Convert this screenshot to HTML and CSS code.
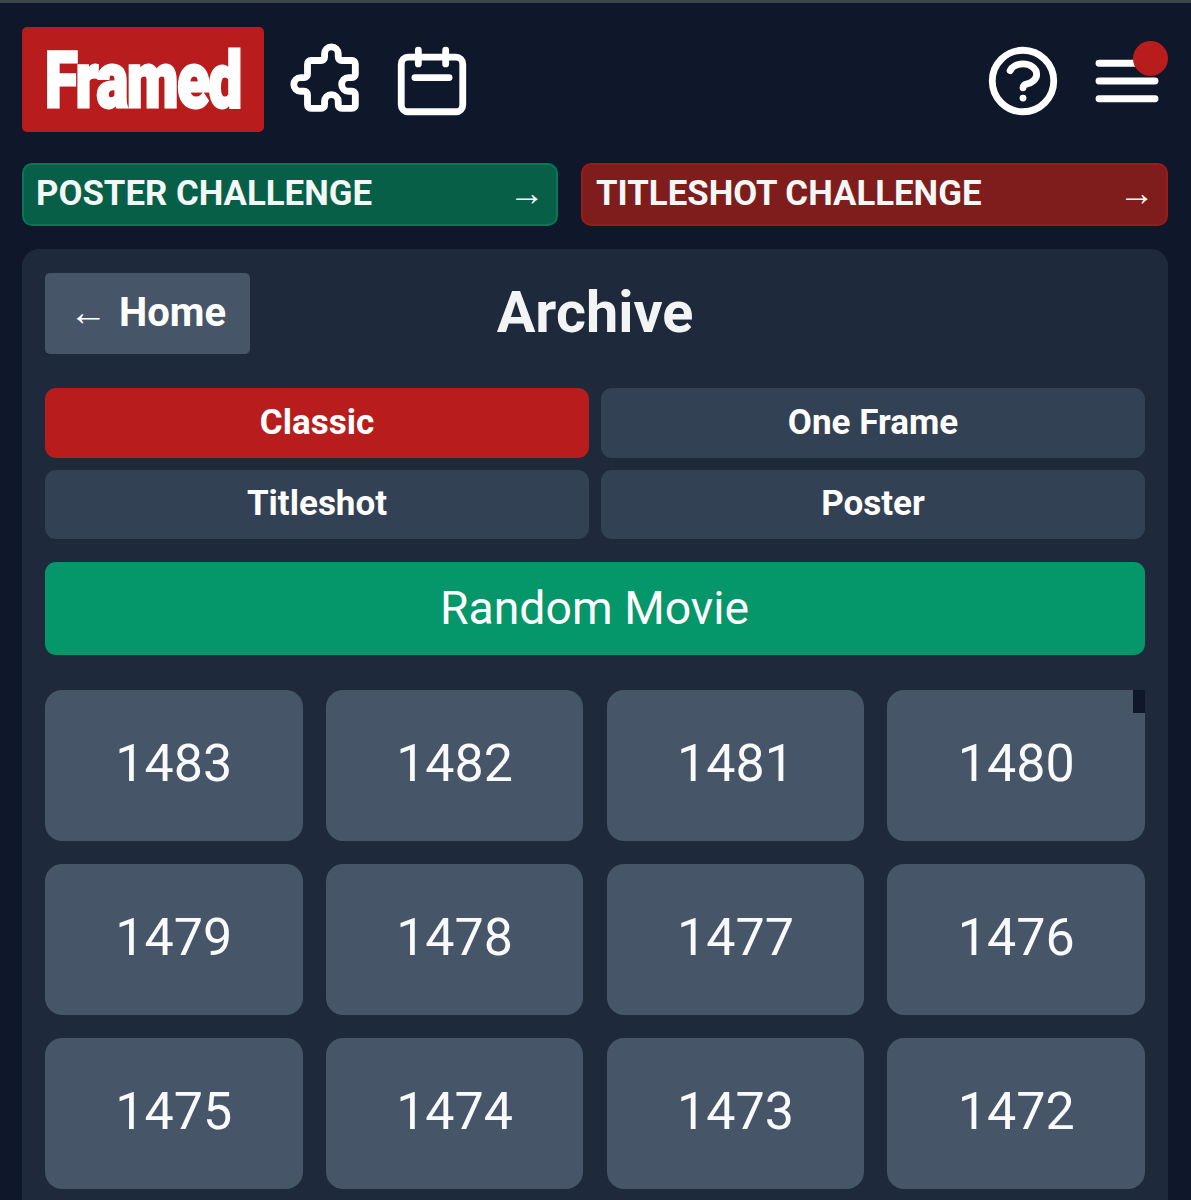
FILE: index.html
```html
<!DOCTYPE html>
<html lang="en">
<head>
<meta charset="utf-8">
<title>Framed Archive</title>
<link rel="stylesheet" href="styles.css">
</head>
<body>
<div class="page">
  <header class="header">
    <a class="logo"><span class="logo-text">Framed</span></a>
    <svg class="icon icon-puzzle" viewBox="0 0 24 24"><path d="M11 4a2 2 0 114 0v1a1 1 0 001 1h3a1 1 0 011 1v3a1 1 0 01-1 1h-1a2 2 0 100 4h1a1 1 0 011 1v3a1 1 0 01-1 1h-3a1 1 0 01-1-1v-1a2 2 0 10-4 0v1a1 1 0 01-1 1H7a1 1 0 01-1-1v-3a1 1 0 00-1-1H4a2 2 0 110-4h1a1 1 0 001-1V7a1 1 0 011-1h3a1 1 0 001-1V4z"/></svg>
    <svg class="icon" viewBox="0 0 24 24"><path d="M8 7V3m8 4V3m-9 8h10M5 21h14a2 2 0 002-2V7a2 2 0 00-2-2H5a2 2 0 00-2 2v12a2 2 0 002 2z"/></svg>
    <div class="spacer"></div>
    <svg class="icon" viewBox="0 0 24 24"><path d="M8.228 9c.549-1.165 2.03-2 3.772-2 2.21 0 4 1.343 4 3 0 1.4-1.278 2.575-3.006 2.907-.542.104-.994.54-.994 1.093m0 3h.01M21 12a9 9 0 11-18 0 9 9 0 0118 0z"/></svg>
    <div class="menu">
      <svg class="icon" viewBox="0 0 24 24"><path d="M3.8 6.8h16.4M3.8 12h16.4M3.8 17.2h16.4"/></svg>
      <span class="dot"></span>
    </div>
  </header>

  <nav class="challenges">
    <a class="challenge challenge-green"><span>POSTER CHALLENGE</span><span class="arrow">→</span></a>
    <a class="challenge challenge-red"><span>TITLESHOT CHALLENGE</span><span class="arrow">→</span></a>
  </nav>

  <main class="panel">
    <div class="title-row">
      <a class="home"><span class="home-arrow">←</span><span>Home</span></a>
      <h1 class="title">Archive</h1>
      <div></div>
    </div>

    <div class="tabs">
      <button class="tab tab-active">Classic</button>
      <button class="tab">One Frame</button>
      <button class="tab">Titleshot</button>
      <button class="tab">Poster</button>
    </div>

    <button class="random">Random Movie</button>

    <div class="grid">
      <a class="cell">1483</a>
      <a class="cell">1482</a>
      <a class="cell">1481</a>
      <a class="cell cell-marked">1480<span class="mark"></span></a>
      <a class="cell">1479</a>
      <a class="cell">1478</a>
      <a class="cell">1477</a>
      <a class="cell">1476</a>
      <a class="cell">1475</a>
      <a class="cell">1474</a>
      <a class="cell">1473</a>
      <a class="cell">1472</a>
    </div>
  </main>
</div>
</body>
</html>
```
FILE: styles.css
```css
* { box-sizing: border-box; }
html, body { margin: 0; height: 1200px; overflow: hidden; }
body {
  background: #0f172a;
  color: #fff;
  font-family: Roboto, "Liberation Sans", sans-serif;
  border-top: 3px solid #3f444c;
}
.page { padding: 24px 23px 0 22px; }

.header { display: flex; align-items: flex-start; gap: 22px; height: 105px; }
.logo {
  width: 242px; height: 105px;
  margin-right: 1px;
  background: #b91c1c;
  border-radius: 5px;
  display: flex; align-items: center; justify-content: center;
  overflow: hidden;
  padding-top: 3px;
}
.logo-text {
  font-family: Roboto, "Liberation Sans", sans-serif;
  font-weight: 900;
  font-size: 78px;
  line-height: 1;
  letter-spacing: -1.5px;
  -webkit-text-stroke: 3px #fff;
  display: inline-block;
  transform: scaleX(.765);
  flex: none;
}
.icon {
  width: 82px; height: 82px;
  margin-top: 13px;
  flex: none;
  fill: none;
  stroke: #fff;
  stroke-width: 2;
  stroke-linecap: round;
  stroke-linejoin: round;
}
.spacer { flex: 1; }
.menu { position: relative; width: 82px; height: 105px; flex: none; }
.dot {
  position: absolute; right: 0; top: 14px;
  width: 35px; height: 35px;
  border-radius: 50%;
  background: #b91c1c;
}

.challenges { display: grid; grid-template-columns: 536px 587px; gap: 23px; margin-top: 31px; }
.challenge {
  height: 63px;
  border-radius: 10px;
  border: 2px solid;
  padding: 0 11px 2px 12px;
  display: flex; align-items: center; justify-content: space-between;
  font-weight: 700; font-size: 34.8px; line-height: 1;
  color: #f3f7f6;
}
.challenge-green { background: #065f46; border-color: #047857; }
.challenge-red { background: #7f1d1d; border-color: #991b1b; padding-left: 13px; }
.arrow {
  font-family: "Liberation Serif", serif;
  font-weight: 400;
  font-size: 36px;
  margin-top: -2px;
}

.panel {
  margin-top: 23px;
  height: 1000px;
  background: #1e293b;
  border-radius: 17px;
  padding: 24px 23px;
}
.title-row { display: grid; grid-template-columns: 1fr auto 1fr; align-items: center; }
.home {
  justify-self: start;
  width: 205px; height: 81px;
  background: #475569;
  border-radius: 5px;
  display: flex; align-items: center; justify-content: center; gap: 12px;
  font-weight: 700; font-size: 40px;
  padding-bottom: 2px;
}
.home-arrow {
  font-family: "Liberation Serif", serif;
  font-weight: 400; font-size: 38px;
  margin-top: -2px;
}
.title { margin: 0 0 2px; font-size: 57.6px; font-weight: 700; line-height: 1; color: #f3f4f6; }

.tabs { display: grid; grid-template-columns: 1fr 1fr; gap: 12px; margin-top: 34px; }
.tab {
  height: 69.5px;
  border: 0;
  border-radius: 11px;
  background: #334155;
  color: #fff;
  font: 700 35px Roboto, sans-serif;
  padding: 0 0 1px;
}
.tab-active { background: #b91c1c; }

.random {
  display: block;
  width: 100%; height: 93px;
  margin-top: 23px;
  border: 0;
  border-radius: 11px;
  background: #059669;
  color: #fff;
  font: 400 46.4px Roboto, sans-serif;
  padding: 0 1px 1px 0;
}

.grid {
  display: grid;
  grid-template-columns: repeat(4, 1fr);
  gap: 23px 23.3px;
  margin-top: 35px;
}
.cell {
  position: relative;
  height: 151px;
  background: #475569;
  border-radius: 17px;
  display: flex; align-items: center; justify-content: center;
  font-size: 52px;
  color: #f8fafc;
  padding-bottom: 4px;
}
.cell-marked { border-top-right-radius: 0; }
.mark {
  position: absolute; top: 0; right: 0;
  width: 12px; height: 23px;
  background: #0f172a;
}
```
